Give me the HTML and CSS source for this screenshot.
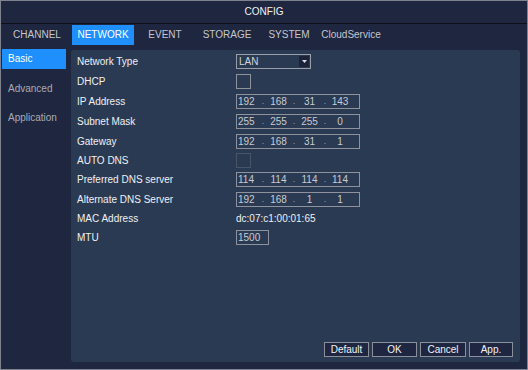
FILE: index.html
```html
<!DOCTYPE html>
<html>
<head>
<meta charset="utf-8">
<link rel="stylesheet" href="styles.css">
</head>
<body>
<div class="window">
  <div class="titlebar">CONFIG</div>
  <div class="tabs">
    <div class="tab first">CHANNEL</div>
    <div class="tab active">NETWORK</div>
    <div class="tab">EVENT</div>
    <div class="tab">STORAGE</div>
    <div class="tab">SYSTEM</div>
    <div class="tab">CloudService</div>
  </div>
  <div class="main">
    <div class="sidebar">
      <div class="side-item active">Basic</div>
      <div class="side-item">Advanced</div>
      <div class="side-item">Application</div>
    </div>
    <div class="panel">
      <div class="rows">
        <div class="row h20"><span class="label">Network Type</span>
          <div class="select"><span class="sel-text">LAN</span><span class="sel-arrow"><svg width="5" height="3" viewBox="0 0 5 3"><path d="M0 0H5L2.5 3Z" fill="#d8dce6"/></svg></span></div>
        </div>
        <div class="row h20"><span class="label">DHCP</span><span class="check"></span></div>
        <div class="row h20"><span class="label">IP Address</span>
          <div class="ip"><span class="seg s1">192</span><span class="dot">.</span><span class="seg">168</span><span class="dot">.</span><span class="seg">31</span><span class="dot">.</span><span class="seg s4">143</span></div>
        </div>
        <div class="row h20"><span class="label">Subnet Mask</span>
          <div class="ip"><span class="seg s1">255</span><span class="dot">.</span><span class="seg">255</span><span class="dot">.</span><span class="seg">255</span><span class="dot">.</span><span class="seg s4">0</span></div>
        </div>
        <div class="row h20"><span class="label">Gateway</span>
          <div class="ip"><span class="seg s1">192</span><span class="dot">.</span><span class="seg">168</span><span class="dot">.</span><span class="seg">31</span><span class="dot">.</span><span class="seg s4">1</span></div>
        </div>
        <div class="row h18"><span class="label">AUTO DNS</span><span class="check disabled"></span></div>
        <div class="row h20"><span class="label">Preferred DNS server</span>
          <div class="ip"><span class="seg s1">114</span><span class="dot">.</span><span class="seg">114</span><span class="dot">.</span><span class="seg">114</span><span class="dot">.</span><span class="seg s4">114</span></div>
        </div>
        <div class="row h20"><span class="label">Alternate DNS Server</span>
          <div class="ip"><span class="seg s1">192</span><span class="dot">.</span><span class="seg">168</span><span class="dot">.</span><span class="seg">1</span><span class="dot">.</span><span class="seg s4">1</span></div>
        </div>
        <div class="row h19"><span class="label">MAC Address</span><span class="value">dc:07:c1:00:01:65</span></div>
        <div class="row h19"><span class="label">MTU</span><div class="mtu">1500</div></div>
      </div>
      <div class="buttons">
        <div class="btn w45">Default</div>
        <div class="btn w45">OK</div>
        <div class="btn w46">Cancel</div>
        <div class="btn w44">App.</div>
      </div>
    </div>
  </div>
</div>
</body>
</html>
```

FILE: styles.css
```css
* { box-sizing: border-box; }
body {
  margin: 0;
  background: #1f2640;
  font-family: "Liberation Sans", Arial, sans-serif;
  font-size: 10px;
}
.window {
  width: 528px;
  height: 370px;
  border: 1px solid #7d828e;
  background: #1f2640;
  display: flex;
  flex-direction: column;
}
.titlebar {
  height: 23px;
  border-bottom: 1px solid #0c0f1a;
  color: #f2f2f2;
  text-align: center;
  line-height: 21px;
  font-size: 10px;
}
.tabs {
  height: 25px;
  display: flex;
  align-items: flex-start;
  padding-top: 1px;
  padding-left: 5px;
}
.tab {
  width: 62px;
  height: 20px;
  line-height: 20px;
  text-align: center;
  color: #c4c6cc;
}
.tab.first { margin-right: 4px; }
.tab.active {
  background: #1e8ffc;
  color: #ffffff;
}
.main {
  flex: 1;
  display: flex;
}
.sidebar {
  width: 70px;
  padding-left: 1px;
  display: flex;
  flex-direction: column;
}
.side-item {
  width: 64px;
  height: 20px;
  line-height: 20px;
  padding-left: 6px;
  color: #a9acb4;
  margin-bottom: 10px;
}
.side-item:nth-child(2) { margin-bottom: 9px; }
.side-item.active {
  background: #1e8ffc;
  color: #ffffff;
}
.panel {
  margin-top: 1px;
  width: 449px;
  height: 312px;
  background: #2a3a53;
  border-radius: 3px;
  display: flex;
  flex-direction: column;
  padding: 1px 7px 5px 6px;
}
.rows { display: flex; flex-direction: column; }
.row {
  display: flex;
  align-items: center;
}
.h20 { height: 20px; }
.h19 { height: 19px; }
.h18 { height: 18px; }
.label {
  width: 159px;
  color: #f0f0f2;
}
.value { color: #f0f0f2; }
.select {
  width: 75px;
  height: 15px;
  border: 1px solid #9a9ea8;
  display: flex;
  align-items: center;
  padding: 1px;
}
.sel-text {
  flex: 1;
  color: #d0d3da;
  padding-left: 1px;
}
.sel-arrow {
  width: 10px;
  height: 11px;
  background: #1c2339;
  display: flex;
  align-items: center;
  justify-content: center;
  padding-top: 1px;
}
.sel-arrow svg { display: block; }
.check {
  width: 15px;
  height: 15px;
  border: 1px solid #8e929c;
}
.check.disabled { border-color: #4a5468; }
.ip {
  width: 124px;
  height: 15px;
  border: 1px solid #8e929c;
  display: flex;
  align-items: center;
  color: #c8cbd2;
}
.seg {
  width: 25px;
  text-align: center;
}
.seg.s1 { width: 23px; text-align: left; padding-left: 1px; }
.seg.s4 { width: 24px; }
.dot {
  width: 6px;
  text-align: center;
  color: #9ea2ac;
  font-size: 9px;
}
.mtu {
  width: 33px;
  height: 15px;
  border: 1px solid #8e929c;
  color: #c8cbd2;
  line-height: 13px;
  padding-left: 1px;
}
.buttons {
  margin-top: auto;
  display: flex;
  justify-content: flex-end;
  gap: 3px;
}
.btn {
  height: 15px;
  border: 1px solid #8a8f9a;
  background: #1e2641;
  color: #f2f2f4;
  text-align: center;
  line-height: 13px;
}
.w45 { width: 45px; }
.w46 { width: 46px; }
.w44 { width: 44px; }
```
